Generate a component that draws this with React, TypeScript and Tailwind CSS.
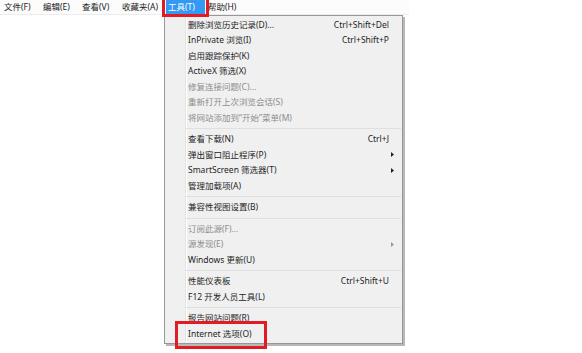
import React from "react";

type Item = { label: string; shortcut?: string; arrow?: boolean; disabled?: boolean } | "sep";

const items: Item[] = [
  { label: "删除浏览历史记录(D)...", shortcut: "Ctrl+Shift+Del" },
  { label: "InPrivate 浏览(I)", shortcut: "Ctrl+Shift+P" },
  { label: "启用跟踪保护(K)" },
  { label: "ActiveX 筛选(X)" },
  { label: "修复连接问题(C)...", disabled: true },
  { label: "重新打开上次浏览会话(S)", disabled: true },
  { label: "将网站添加到“开始”菜单(M)", disabled: true },
  "sep",
  { label: "查看下载(N)", shortcut: "Ctrl+J" },
  { label: "弹出窗口阻止程序(P)", arrow: true },
  { label: "SmartScreen 筛选器(T)", arrow: true },
  { label: "管理加载项(A)" },
  "sep",
  { label: "兼容性视图设置(B)" },
  "sep",
  { label: "订阅此源(F)...", disabled: true },
  { label: "源发现(E)", arrow: true, disabled: true },
  { label: "Windows 更新(U)" },
  "sep",
  { label: "性能仪表板", shortcut: "Ctrl+Shift+U" },
  { label: "F12 开发人员工具(L)" },
  "sep",
  { label: "报告网站问题(R)" },
  { label: "Internet 选项(O)" },
];

export default function App() {
  return (
    <div
      className="relative w-[582px] h-[353px] bg-white overflow-hidden text-[8.5px] leading-none text-[#222]"
      style={{ fontFamily: '"Noto Sans", "Noto Sans CJK SC", sans-serif' }}
    >
      {/* menu bar */}
      <div className="flex items-center h-[15px] w-[409px] pl-[4px] bg-[#fcfcfc] border-b border-[#ececec]">
        <span className="w-[39px]">文件(F)</span>
        <span className="w-[39px]">编辑(E)</span>
        <span className="w-[40px]">查看(V)</span>
        <span className="w-[44px]">收藏夹(A)</span>
        <span className="flex items-center w-[39px] h-[14px] self-start pl-[2px] bg-[#3399f3] text-white">工具(T)</span>
        <span className="ml-[3px]">帮助(H)</span>
      </div>

      {/* dropdown */}
      <div className="absolute left-[164px] top-[15px] w-[239px] border border-[#979797] bg-[#f0f0f0] py-[1px] shadow-[2px_2px_0_#b8b8b8]">
        <div className="absolute left-[20px] top-0 bottom-0 w-px bg-[#e2e3e3]" />
        <div className="absolute left-[21px] top-0 bottom-0 w-px bg-white" />
        {items.map((it, i) =>
          it === "sep" ? (
            <div key={i} className="relative h-[6px] flex items-center pl-[21px] pr-[1px]">
              <div className="w-full h-px bg-[#e0e0e0]" />
            </div>
          ) : (
            <div
              key={i}
              className={`relative h-[15.5px] flex items-center pl-[23px] pr-[7px] ${
                it.disabled ? "text-[#8d8d8d]" : "text-[#1e1e1e]"
              }`}
            >
              <span className="flex-1 whitespace-nowrap">{it.label}</span>
              {it.shortcut && <span className="mr-[6px] whitespace-nowrap">{it.shortcut}</span>}
              {it.arrow && (
                <svg width="3" height="5" viewBox="0 0 3 5" className="mr-[1px]">
                  <polygon points="0,0 3,2.5 0,5" fill={it.disabled ? "#9a9a9a" : "#222"} />
                </svg>
              )}
            </div>
          )
        )}
      </div>

      {/* red highlight boxes */}
      <div className="absolute left-[162px] top-[-3px] w-[47px] h-[20px] border-[3px] border-[#e11c25]" />
      <div className="absolute left-[175px] top-[321px] w-[92px] h-[28px] border-[3px] border-[#e11c25]" />
    </div>
  );
}
